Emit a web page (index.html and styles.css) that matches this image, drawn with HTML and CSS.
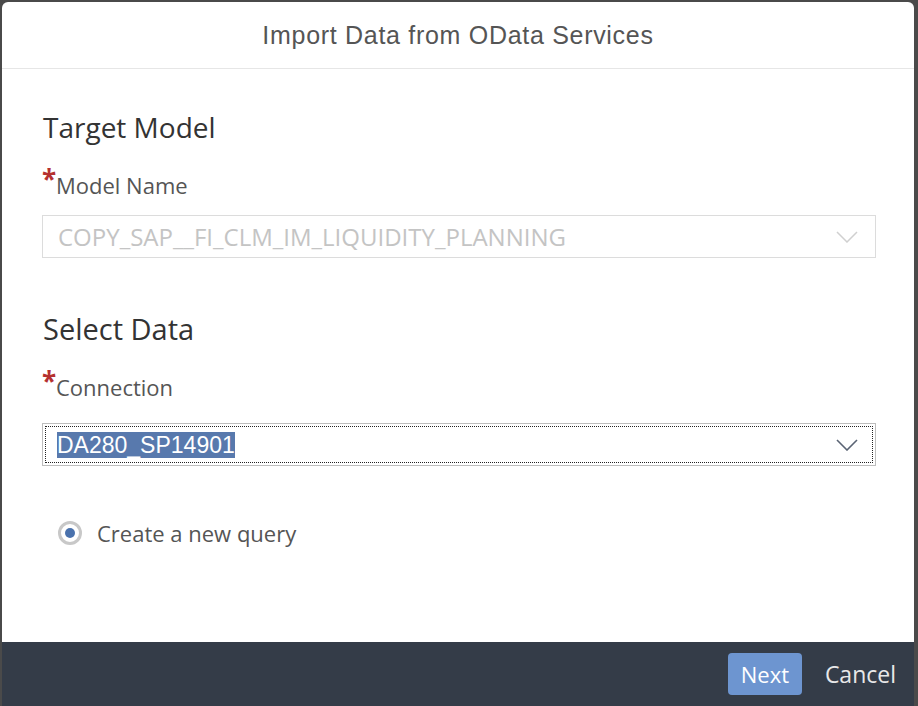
FILE: index.html
```html
<!DOCTYPE html>
<html>
<head>
<meta charset="utf-8">
<link rel="stylesheet" href="styles.css">
</head>
<body>
<div class="dialog">
  <div class="header">Import Data from OData Services</div>
  <div class="content">
    <h2 class="section first">Target Model</h2>
    <div class="label"><span class="req">*</span>Model Name</div>
    <div class="select disabled">
      <span class="value">COPY_SAP__FI_CLM_IM_LIQUIDITY_PLANNING</span>
      <svg class="chev" width="22" height="12" viewBox="0 0 22 12"><path d="M1 1 L11 11 L21 1" fill="none" stroke="#d0d0d0" stroke-width="1.5"/></svg>
    </div>
    <h2 class="section second">Select Data</h2>
    <div class="label"><span class="req">*</span>Connection</div>
    <div class="select focused">
      <div class="focusring">
        <span class="value sel">DA280_SP14901</span>
        <svg class="chev" width="22" height="12" viewBox="0 0 22 12"><path d="M1 1 L11 11 L21 1" fill="none" stroke="#5a6474" stroke-width="1.6"/></svg>
      </div>
    </div>
    <div class="radio-row">
      <span class="radio"><span class="dot"></span></span>
      <span class="radio-label">Create a new query</span>
    </div>
  </div>
  <div class="footer">
    <button class="btn primary">Next</button>
    <button class="btn plain">Cancel</button>
  </div>
</div>
</body>
</html>
```

FILE: styles.css
```css
html, body {
  margin: 0;
  padding: 0;
  background: #4a4a4a;
  height: 706px;
  overflow: hidden;
}
.dialog {
  margin: 2px 4px 0 2px;
  height: 704px;
  background: #fff;
  border-radius: 6px 6px 0 0;
  display: flex;
  flex-direction: column;
  font-family: "Open Sans", "Noto Sans", sans-serif;
}
.header {
  height: 66px;
  flex: none;
  border-bottom: 1px solid #e6e6e6;
  display: flex;
  align-items: center;
  justify-content: center;
  font-family: "Liberation Sans", sans-serif;
  font-size: 25px;
  color: #555;
  letter-spacing: 0.7px;
}
.content {
  flex: 1;
  padding: 0 38px 0 40px;
}
.section {
  margin: 0;
  font-weight: normal;
  font-size: 28px;
  line-height: 36px;
  color: #333;
  padding-left: 1px;
}
.section.first {
  margin-top: 40px;
}
.section.second {
  margin-top: 53px;
  font-size: 29px;
}
.label {
  margin-top: 26px;
  font-size: 22px;
  line-height: 28px;
  color: #555;
  position: relative;
  padding-left: 14px;
}
.req {
  position: absolute;
  left: 0;
  top: -6px;
  color: #b5312f;
  font-size: 26px;
  font-weight: bold;
}
.select {
  margin-top: 16px;
  height: 43px;
  box-sizing: border-box;
  border: 1px solid #dcdcdc;
  display: flex;
  align-items: center;
}
.select.disabled .value {
  color: #c4c4c4;
  font-size: 24px;
  padding-left: 15px;
  flex: 1;
}
.chev {
  margin-right: 17px;
}
.select.focused {
  border-color: #bdbdbd;
  padding: 2px;
  margin-top: 22px;
}
.focusring {
  flex: 1;
  height: 100%;
  box-sizing: border-box;
  border: 1px dotted #222;
  display: flex;
  align-items: center;
}
.focusring .chev {
  margin-right: 14px;
}
.value.sel {
  font-family: "Liberation Sans", sans-serif;
  font-size: 23px;
  background: #5879ad;
  color: #fff;
  margin-left: 11px;
  line-height: 26px;
  flex: none;
  margin-right: auto;
}
.radio-row {
  display: flex;
  align-items: center;
  height: 30px;
  margin-top: 52px;
  padding-left: 16px;
}
.radio {
  width: 24px;
  height: 24px;
  box-sizing: border-box;
  border: 3px solid #c8c8c8;
  border-radius: 50%;
  display: flex;
  align-items: center;
  justify-content: center;
}
.dot {
  width: 10px;
  height: 10px;
  border-radius: 50%;
  background: #4a72ad;
}
.radio-label {
  margin-left: 15px;
  font-size: 22px;
  color: #555;
}
.footer {
  height: 64px;
  flex: none;
  background: #343c48;
  display: flex;
  align-items: center;
  justify-content: flex-end;
  padding-right: 10px;
  gap: 15px;
}
.btn {
  font-family: "Open Sans", "Noto Sans", sans-serif;
  font-size: 22px;
  border: none;
  height: 42px;
  border-radius: 4px;
  cursor: pointer;
}
.btn.primary {
  background: #6d95d0;
  color: #fff;
  width: 74px;
  padding: 0;
}
.btn.plain {
  background: transparent;
  color: #e8e8e8;
  font-size: 23px;
  padding: 0 8px;
}
```
